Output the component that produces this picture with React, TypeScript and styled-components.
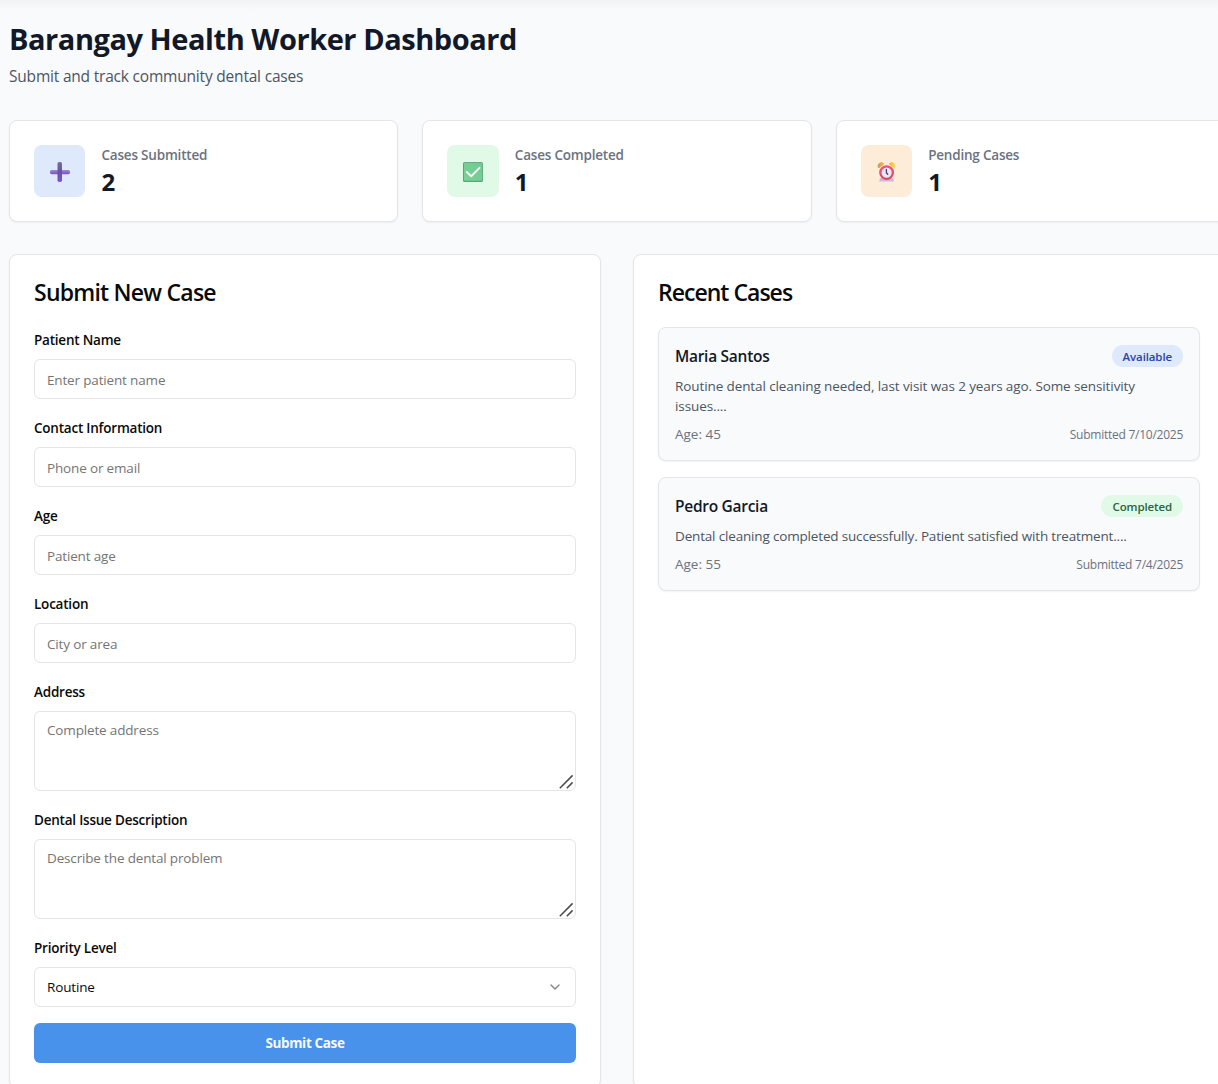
import React from "react";
import styled, { createGlobalStyle } from "styled-components";
import { ChevronDown } from "lucide-react";

const Global = createGlobalStyle`
  *, *::before, *::after { box-sizing: border-box; margin: 0; }
  html, body { background: #f9fafc; }
  body {
    height: 1084px;
    overflow: hidden;
    font-family: "Segoe UI", "Open Sans", "Noto Sans", sans-serif;
    font-size: 16px;
    line-height: 24px;
    color: #0a0a0b;
  }
  input, textarea, button { font: inherit; letter-spacing: inherit; }
`;

type Track = { $ls?: number };

const Page = styled.main`
  height: 1084px;
  overflow: hidden;
  padding: 20px 0 0 9px;
  background: linear-gradient(#f2f3f5, #f9fafc 10px);
`;

const Container = styled.div`
  width: 1216px;
  display: flex;
  flex-direction: column;
  gap: 32px;
`;

const Header = styled.header`
  display: flex;
  flex-direction: column;
  gap: 8px;
`;

const Title = styled.h1`
  font-size: 29px;
  line-height: 37px;
  height: 36px;
  font-weight: 700;
  color: #111827;
  letter-spacing: -0.45px;
  white-space: nowrap;
`;

const Subtitle = styled.p`
  color: #4b5563;
  font-size: 15.5px;
  letter-spacing: -0.2px;
`;

const Stats = styled.section`
  display: grid;
  grid-template-columns: repeat(3, 1fr);
  gap: 24px;
`;

const Card = styled.div`
  background: #fff;
  border: 1px solid #e5e5e7;
  border-radius: 8px;
  box-shadow: 0 1px 2px rgba(0, 0, 0, 0.05);
  padding: 24px;
`;

const StatCard = styled(Card)`
  display: flex;
  align-items: center;
  gap: 16.3px;
`;

const IconTile = styled.div<{ $bg: string }>`
  width: 51.2px;
  height: 52px;
  padding-top: 2px;
  border-radius: 8px;
  background: ${(p) => p.$bg};
  display: flex;
  align-items: center;
  justify-content: center;
`;

const StatLabel = styled.p`
  font-size: 13.5px;
  line-height: 21px;
  height: 20px;
  font-weight: 600;
  color: #6b7280;
  letter-spacing: -0.2px;
`;

const StatValue = styled.p`
  font-size: 24px;
  line-height: 34px;
  height: 32px;
  font-weight: 700;
  color: #111827;
`;

const Columns = styled.section`
  display: grid;
  grid-template-columns: 1fr 1fr;
  gap: 32px;
`;

const CardTitle = styled.h2<Track>`
  font-size: 23px;
  line-height: 27px;
  height: 24px;
  margin-bottom: 24px;
  font-weight: 600;
  letter-spacing: ${(p) => p.$ls ?? 0}px;
`;

const Form = styled.form`
  display: flex;
  flex-direction: column;
  gap: 16px;
`;

const Field = styled.div`
  display: flex;
  flex-direction: column;
  gap: 8px;
`;

const Label = styled.label`
  height: 24px;
  line-height: 27px;
  font-size: 13.5px;
  font-weight: 600;
  letter-spacing: -0.22px;
`;

const Input = styled.input`
  height: 40px;
  width: 100%;
  padding: 9px 12px 7px;
  border: 1px solid #e5e5e7;
  border-radius: 6px;
  background: #fff;
  font-size: 13.5px;
  line-height: 20px;
  letter-spacing: -0.16px;
  &::placeholder { color: #757575; opacity: 1; }
`;

const AreaWrap = styled.div`
  position: relative;
  height: 80px;
`;

const TextArea = styled.textarea`
  display: block;
  width: 100%;
  height: 80px;
  resize: none;
  padding: 8px 12px;
  border: 1px solid #e5e5e7;
  border-radius: 6px;
  background: #fff;
  font-size: 13.5px;
  line-height: 20px;
  letter-spacing: -0.16px;
  &::placeholder { color: #757575; opacity: 1; }
`;

const Grip = styled.svg`
  position: absolute;
  right: 2px;
  bottom: 2px;
`;

const Select = styled.button`
  display: flex;
  align-items: center;
  justify-content: space-between;
  height: 40px;
  padding: 0 12px;
  border: 1px solid #e5e5e7;
  border-radius: 6px;
  background: #fff;
  color: #0a0a0b;
  font-size: 13.5px;
  line-height: 20px;
  letter-spacing: -0.16px;
  svg { opacity: 0.5; }
`;

const Submit = styled.button`
  height: 40px;
  border: 0;
  border-radius: 6px;
  background: #4892eb;
  color: #f8fafc;
  font-size: 13.5px;
  line-height: 20px;
  font-weight: 700;
  letter-spacing: -0.35px;
`;

const CaseList = styled.div`
  display: flex;
  flex-direction: column;
  gap: 16px;
`;

const CaseCard = styled.article`
  display: flex;
  flex-direction: column;
  gap: 8px;
  padding: 16px;
  border: 1px solid #e5e5e7;
  border-radius: 8px;
  background: #f9fafc;
  box-shadow: 0 1px 2px rgba(0, 0, 0, 0.05);
`;

const Row = styled.div`
  display: flex;
  align-items: center;
  justify-content: space-between;
`;

const Name = styled.h3`
  font-size: 15.5px;
  line-height: 25px;
  height: 24px;
  font-weight: 600;
  color: #111827;
  letter-spacing: -0.28px;
`;

const Badge = styled.span<{ $bg: string; $fg: string }>`
  height: 22px;
  padding: 0 11px;
  border-radius: 11px;
  font-size: 11.5px;
  line-height: 23px;
  font-weight: 600;
  background: ${(p) => p.$bg};
  color: ${(p) => p.$fg};
  letter-spacing: -0.12px;
`;

const Description = styled.p<Track>`
  font-size: 13.5px;
  line-height: 20px;
  color: #4b5563;
  letter-spacing: ${(p) => p.$ls ?? 0}px;
`;

const Age = styled.span`
  font-size: 13.5px;
  line-height: 20px;
  color: #6b7280;
`;

const Submitted = styled.span`
  font-size: 12px;
  line-height: 18px;
  height: 16px;
  color: #6b7280;
  letter-spacing: -0.25px;
`;

const PlusIcon = () => (
  <svg width="20" height="20" viewBox="0 0 20 20">
    <defs>
      <linearGradient id="plusH" x1="0" y1="0" x2="0" y2="1">
        <stop offset="0" stopColor="#9a8ec4" />
        <stop offset="1" stopColor="#8148d2" />
      </linearGradient>
      <linearGradient id="plusV" x1="0" y1="0" x2="0" y2="1">
        <stop offset="0" stopColor="#7668a5" />
        <stop offset="0.5" stopColor="#65559a" />
        <stop offset="1" stopColor="#8450d8" />
      </linearGradient>
    </defs>
    <rect x="0" y="8" width="20" height="4.2" rx="1.6" fill="url(#plusH)" />
    <rect x="7.5" y="0" width="4.5" height="20" rx="1.8" fill="url(#plusV)" />
  </svg>
);

const CheckIcon = () => (
  <svg width="20" height="20" viewBox="0 0 20 20">
    <defs>
      <linearGradient id="checkBg" x1="1" y1="0" x2="0" y2="1">
        <stop offset="0" stopColor="#70c993" />
        <stop offset="1" stopColor="#79d396" />
      </linearGradient>
    </defs>
    <rect width="20" height="20" rx="1.6" fill="#5fa277" />
    <rect x="1" y="0.7" width="18.3" height="18" rx="1.2" fill="url(#checkBg)" />
    <path d="M3.8 10 8.2 14.2 16.5 5.9" fill="none" stroke="#f5f7f8" strokeWidth="2" strokeLinecap="round" strokeLinejoin="round" />
  </svg>
);

const ClockIcon = () => (
  <svg width="20" height="20" viewBox="-0.6 0.4 20 20">
    <defs>
      <linearGradient id="bellL"><stop offset="0" stopColor="#c99a55" /><stop offset="1" stopColor="#f3bb45" /></linearGradient>
      <linearGradient id="bellR"><stop offset="0" stopColor="#e6b444" /><stop offset="1" stopColor="#fbe04c" /></linearGradient>
      <linearGradient id="ring" x1="0" y1="0" x2="0" y2="1"><stop offset="0" stopColor="#f0527c" /><stop offset="1" stopColor="#dc4a62" /></linearGradient>
    </defs>
    <path d="M3.4 16.5h13.2l.8 3.4H2.6z" fill="#cdb9df" />
    <path d="M1.2 5.6C.4 2.6 3 .2 5.4.6c1.3.2 2 1.2 2 2.2L3 6.2c-.8.4-1.6.1-1.8-.6z" fill="url(#bellL)" />
    <path d="M18.8 5.6C19.6 2.6 17 .2 14.6.6c-1.3.2-2 1.2-2 2.2L17 6.2c.8.4 1.6.1 1.8-.6z" fill="url(#bellR)" />
    <circle cx="10" cy="11" r="6.3" fill="#eee5f5" stroke="url(#ring)" strokeWidth="2.3" />
    <path d="M9.8 7.8v3.4l1.3 1.5" fill="none" stroke="#54405f" strokeWidth="1.3" strokeLinecap="round" />
  </svg>
);

const GripLines = () => (
  <Grip width="15" height="15" viewBox="0 0 15 15">
    <path d="M.8 14.2 13.6 1.4M7.8 14.2l5.8-5.8" stroke="#4b4b4b" strokeWidth="1.5" fill="none" />
  </Grip>
);

const stats = [
  { label: "Cases Submitted", value: 2, bg: "#dfe9fc", icon: <PlusIcon /> },
  { label: "Cases Completed", value: 1, bg: "#e1fae8", icon: <CheckIcon /> },
  { label: "Pending Cases", value: 1, bg: "#fdedd8", icon: <ClockIcon /> },
];

const inputs = [
  { id: "name", label: "Patient Name", hint: "Enter patient name" },
  { id: "contact", label: "Contact Information", hint: "Phone or email" },
  { id: "age", label: "Age", hint: "Patient age" },
  { id: "location", label: "Location", hint: "City or area" },
];

const areas = [
  { id: "address", label: "Address", hint: "Complete address" },
  { id: "issue", label: "Dental Issue Description", hint: "Describe the dental problem" },
];

const cases = [
  {
    name: "Maria Santos",
    status: "Available",
    bg: "#dfe9fc",
    fg: "#2b43ab",
    text: "Routine dental cleaning needed, last visit was 2 years ago. Some sensitivity issues....",
    ls: -0.1,
    age: 45,
    date: "7/10/2025",
  },
  {
    name: "Pedro Garcia",
    status: "Completed",
    bg: "#e1fae8",
    fg: "#2c6440",
    text: "Dental cleaning completed successfully. Patient satisfied with treatment....",
    ls: -0.17,
    age: 55,
    date: "7/4/2025",
  },
];

export default function App() {
  return (
    <>
      <Global />
      <Page>
        <Container>
          <Header>
            <Title>Barangay Health Worker Dashboard</Title>
            <Subtitle>Submit and track community dental cases</Subtitle>
          </Header>
          <Stats>
            {stats.map((s) => (
              <StatCard key={s.label}>
                <IconTile $bg={s.bg}>{s.icon}</IconTile>
                <div>
                  <StatLabel>{s.label}</StatLabel>
                  <StatValue>{s.value}</StatValue>
                </div>
              </StatCard>
            ))}
          </Stats>
          <Columns>
            <Card>
              <CardTitle $ls={-0.77}>Submit New Case</CardTitle>
              <Form>
                {inputs.map((f) => (
                  <Field key={f.id}>
                    <Label htmlFor={f.id}>{f.label}</Label>
                    <Input id={f.id} placeholder={f.hint} />
                  </Field>
                ))}
                {areas.map((f) => (
                  <Field key={f.id}>
                    <Label htmlFor={f.id}>{f.label}</Label>
                    <AreaWrap>
                      <TextArea id={f.id} placeholder={f.hint} />
                      <GripLines />
                    </AreaWrap>
                  </Field>
                ))}
                <Field>
                  <Label>Priority Level</Label>
                  <Select type="button">
                    <span>Routine</span>
                    <ChevronDown size={16} />
                  </Select>
                </Field>
                <Submit type="button">Submit Case</Submit>
              </Form>
            </Card>
            <Card>
              <CardTitle $ls={-0.98}>Recent Cases</CardTitle>
              <CaseList>
                {cases.map((c) => (
                  <CaseCard key={c.name}>
                    <Row>
                      <Name>{c.name}</Name>
                      <Badge $bg={c.bg} $fg={c.fg}>{c.status}</Badge>
                    </Row>
                    <Description $ls={c.ls}>{c.text}</Description>
                    <Row>
                      <Age>Age: {c.age}</Age>
                      <Submitted>Submitted {c.date}</Submitted>
                    </Row>
                  </CaseCard>
                ))}
              </CaseList>
            </Card>
          </Columns>
        </Container>
      </Page>
    </>
  );
}
